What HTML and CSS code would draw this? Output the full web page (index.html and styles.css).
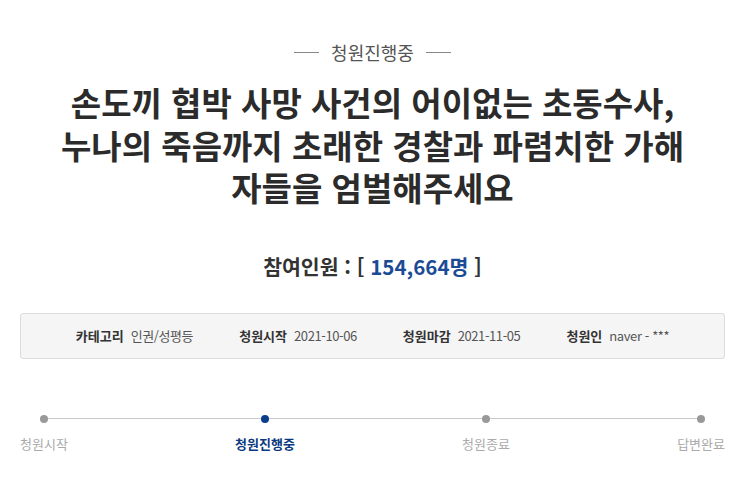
FILE: index.html
```html
<!DOCTYPE html>
<html lang="ko">
<head>
<meta charset="utf-8">
<link rel="stylesheet" href="styles.css">
</head>
<body>
<div class="page">
  <div class="status"><span class="status-line"></span><span class="status-text">청원진행중</span><span class="status-line"></span></div>
  <h1 class="title">손도끼 협박 사망 사건의 어이없는 초동수사,<br>누나의 죽음까지 초래한 경찰과 파렴치한 가해<br>자들을 엄벌해주세요</h1>
  <div class="count">참여인원 : [ <span class="count-num">154,664명</span> ]</div>
  <ul class="info">
    <li class="info-item"><span class="info-label">카테고리</span><span class="info-value">인권/성평등</span></li>
    <li class="info-item"><span class="info-label">청원시작</span><span class="info-value">2021-10-06</span></li>
    <li class="info-item"><span class="info-label">청원마감</span><span class="info-value">2021-11-05</span></li>
    <li class="info-item"><span class="info-label">청원인</span><span class="info-value">naver - ***</span></li>
  </ul>
  <ol class="steps">
    <li class="step"><span class="dot"></span><span class="step-label">청원시작</span></li>
    <li class="step active"><span class="dot"></span><span class="step-label">청원진행중</span></li>
    <li class="step"><span class="dot"></span><span class="step-label">청원종료</span></li>
    <li class="step"><span class="dot"></span><span class="step-label">답변완료</span></li>
  </ol>
</div>
</body>
</html>
```

FILE: styles.css
```css
* { box-sizing: border-box; }
html, body { margin: 0; padding: 0; background: #fff; }
body {
  font-family: "Noto Sans CJK KR", "Noto Sans", sans-serif;
  color: #333;
}
.page {
  width: 745px;
  padding: 0 20px 0 20px;
}
.status {
  display: flex;
  justify-content: center;
  align-items: center;
  gap: 12px;
  height: 24px;
  margin-top: 40px;
}
.status-line {
  width: 25px;
  height: 1px;
  background: #888;
}
.status-text {
  font-size: 18px;
  color: #555;
  line-height: 24px;
}
.title {
  margin: 17px 0 0 0;
  text-align: center;
  font-size: 33px;
  line-height: 42.5px;
  font-weight: 700;
  color: #2b2b2b;
  letter-spacing: 0;
}
.count {
  margin-top: 43px;
  text-align: center;
  font-size: 20.5px;
  font-weight: 700;
  line-height: 28px;
  color: #333;
}
.count-num { color: #1c4b95; }
.info {
  list-style: none;
  margin: 33px 0 0 0;
  padding: 0;
  height: 46px;
  border: 1px solid #dcdcdc;
  border-radius: 3px;
  background: #f5f5f5;
  display: flex;
  justify-content: center;
  align-items: center;
  gap: 46px;
  font-size: 13px;
}
.info-item { display: flex; gap: 7px; align-items: center; }
.info-label { font-weight: 700; color: #333; }
.info-value { color: #555; letter-spacing: -0.4px; }
.steps {
  list-style: none;
  margin: 56px 0 0 0;
  padding: 0;
  display: flex;
  justify-content: space-between;
  position: relative;
}
.steps::before {
  content: "";
  position: absolute;
  left: 22px;
  right: 22px;
  top: 3px;
  height: 1px;
  background: #c8c8c8;
}
.step {
  display: flex;
  flex-direction: column;
  align-items: center;
  gap: 12px;
  position: relative;
}
.dot {
  width: 8px;
  height: 8px;
  border-radius: 50%;
  background: #999;
}
.step-label {
  font-size: 13px;
  line-height: 18px;
  color: #aaa;
  white-space: nowrap;
}
.step.active .dot { background: #0b3d8f; }
.step.active .step-label { color: #0b3a80; font-weight: 700; }
```
